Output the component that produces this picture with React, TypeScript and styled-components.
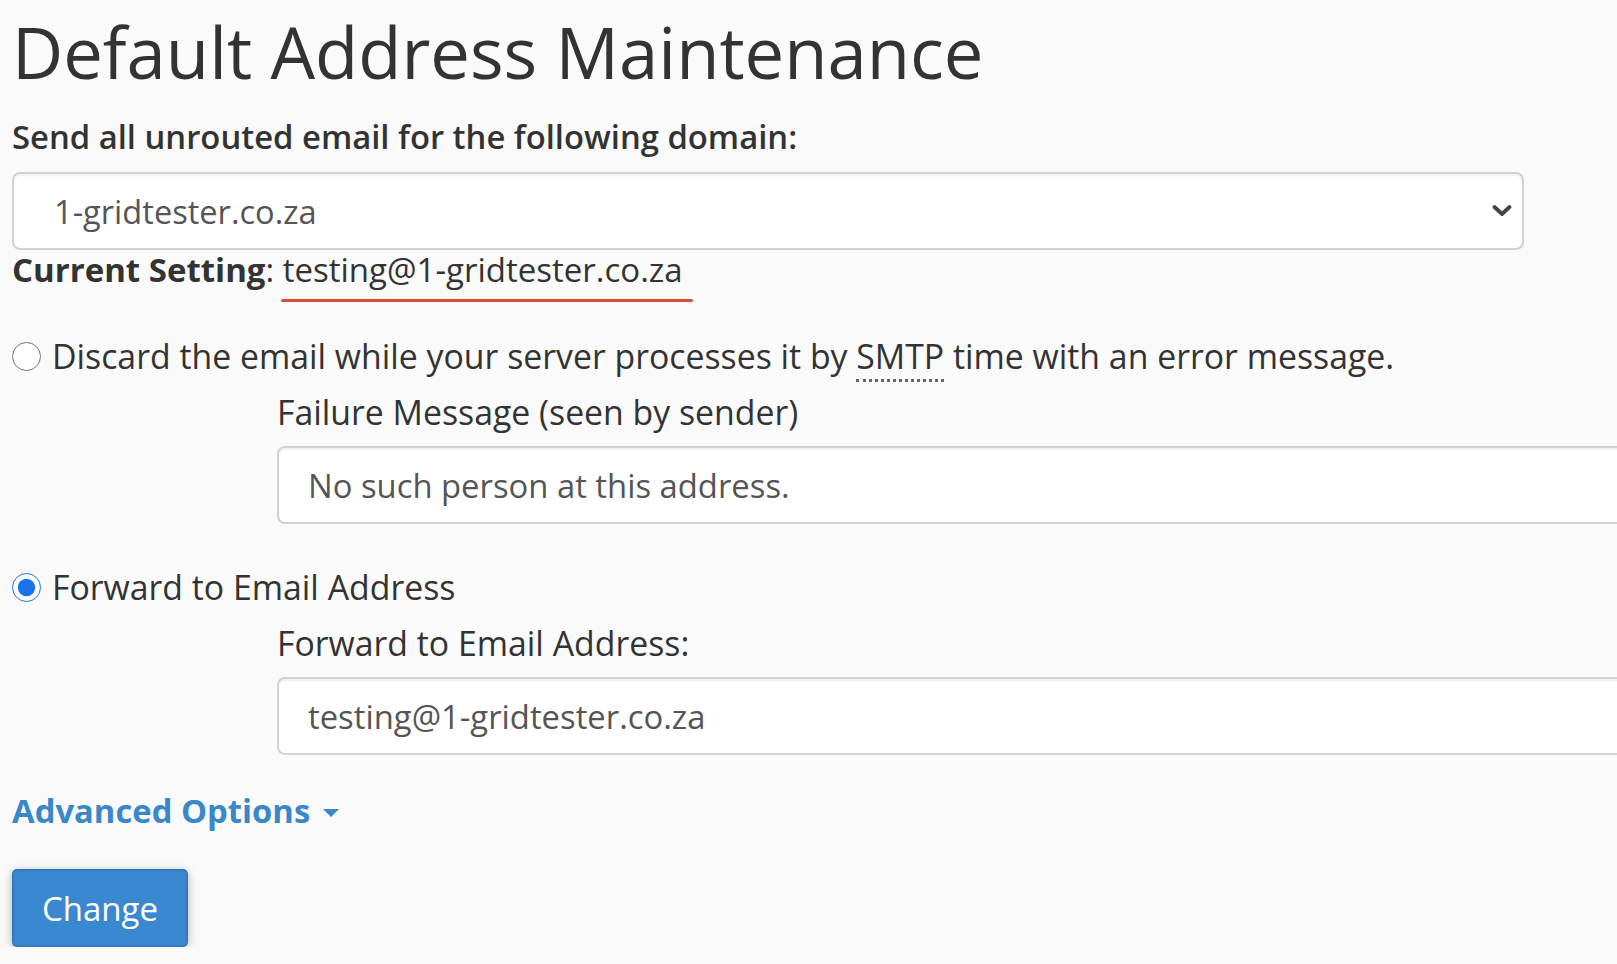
import React from "react";
import styled, { createGlobalStyle } from "styled-components";

const GlobalStyle = createGlobalStyle`
  html, body {
    margin: 0;
    padding: 0;
    background: #fafafa;
    overflow: hidden;
  }
  body {
    font-family: "Open Sans", "Liberation Sans", sans-serif;
    font-size: 33.8px;
    line-height: 40px;
    color: #333;
  }
`;

function App(): JSX.Element {
  return (
    <>
      <GlobalStyle />
      <Page>
        <Title>Default Address Maintenance</Title>
        <FieldLabel htmlFor="domain">
          Send all unrouted email for the following domain:
        </FieldLabel>
        <SelectWrap>
          <DomainSelect id="domain" defaultValue="1-gridtester.co.za">
            <option>1-gridtester.co.za</option>
          </DomainSelect>
          <Chevron viewBox="0 0 20 14" aria-hidden="true">
            <path
              d="M2.5 3 L10 10 L17.5 3"
              fill="none"
              stroke="#444"
              strokeWidth="3.8"
              strokeLinecap="round"
              strokeLinejoin="round"
            />
          </Chevron>
        </SelectWrap>
        <CurrentSetting>
          <strong>Current Setting</strong>:{" "}
          <Marked>testing@1-gridtester.co.za</Marked>
        </CurrentSetting>

        <RadioRow $top={46}>
          <Radio type="radio" name="action" id="discard" />
          <label htmlFor="discard">
            Discard the email while your server processes it by{" "}
            <Abbr title="Simple Mail Transfer Protocol">SMTP</Abbr> time with an
            error message.
          </label>
        </RadioRow>
        <SubBlock>
          <SubLabel htmlFor="failmsg">Failure Message (seen by sender)</SubLabel>
          <TextInput id="failmsg" defaultValue="No such person at this address." />
        </SubBlock>

        <RadioRow $top={43}>
          <Radio type="radio" name="action" id="forward" defaultChecked />
          <label htmlFor="forward">Forward to Email Address</label>
        </RadioRow>
        <SubBlock>
          <SubLabel htmlFor="fwd">Forward to Email Address:</SubLabel>
          <TextInput id="fwd" defaultValue="testing@1-gridtester.co.za" />
        </SubBlock>

        <AdvancedLink href="#">
          Advanced Options <Caret />
        </AdvancedLink>
        <div>
          <ChangeButton type="button">Change</ChangeButton>
        </div>
      </Page>
    </>
  );
}

export default App;

const Page = styled.div`
  padding: 14px 0 0 12px;
`;

const Title = styled.h1`
  margin: 0 0 26px 0;
  font-size: 70.6px;
  font-weight: 400;
  line-height: 77px;
  color: #333;
`;

const FieldLabel = styled.label`
  display: block;
  font-size: 32.8px;
  font-weight: 600;
  margin-bottom: 15px;
`;

const SelectWrap = styled.div`
  position: relative;
  width: 1512px;
`;

const DomainSelect = styled.select`
  display: block;
  width: 100%;
  height: 78px;
  box-sizing: border-box;
  padding: 0 60px 0 40px;
  appearance: none;
  background: #fff;
  border: 2px solid #d2d2d2;
  border-radius: 8px;
  font-family: inherit;
  font-size: 32.6px;
  color: #555;
  box-shadow: inset 0 2px 2px rgba(0, 0, 0, 0.06);
`;

const Chevron = styled.svg`
  position: absolute;
  right: 12px;
  top: 32px;
  width: 20px;
  height: 14px;
  pointer-events: none;
`;

const CurrentSetting = styled.div`
  font-size: 33px;

  strong {
    font-weight: 700;
  }
`;

const Marked = styled.span`
  position: relative;
  display: inline-block;

  &::after {
    content: "";
    position: absolute;
    left: -2px;
    right: -10px;
    bottom: -12px;
    height: 3px;
    border-radius: 2px;
    background: #e24a38;
  }
`;

const RadioRow = styled.div<{ $top: number }>`
  display: flex;
  align-items: center;
  gap: 11px;
  margin-top: ${(p) => p.$top}px;
  font-weight: 500;
`;

const Radio = styled.input`
  width: 29px;
  height: 29px;
  margin: 0;
  flex: none;
  accent-color: #1a73e8;
`;

const Abbr = styled.abbr`
  text-decoration: none;
  border-bottom: 3px dotted #666;
  cursor: help;
`;

const SubBlock = styled.div`
  padding-left: 265px;
  margin-top: 16px;
`;

const SubLabel = styled.label`
  display: block;
  font-weight: 500;
  margin-bottom: 14px;
`;

const TextInput = styled.input`
  display: block;
  width: 1500px;
  height: 78px;
  box-sizing: border-box;
  padding: 0 29px;
  background: #fff;
  border: 2px solid #d2d2d2;
  border-radius: 8px;
  font-family: inherit;
  font-size: 32.8px;
  color: #555;
  box-shadow: inset 0 2px 2px rgba(0, 0, 0, 0.06);
`;

const AdvancedLink = styled.a`
  display: inline-flex;
  align-items: center;
  margin-top: 36px;
  font-size: 32.8px;
  font-weight: 700;
  color: #3a87c9;
  text-decoration: none;
`;

const Caret = styled.span`
  display: inline-block;
  width: 0;
  height: 0;
  margin-left: 13px;
  margin-top: 4px;
  border-left: 8px solid transparent;
  border-right: 8px solid transparent;
  border-top: 8px solid #3a87c9;
`;

const ChangeButton = styled.button`
  margin-top: 38px;
  height: 78px;
  padding: 0 28px;
  background: #3a89d0;
  border: 2px solid #2f7ac0;
  border-radius: 5px;
  color: #fff;
  font-family: inherit;
  font-size: 33px;
  cursor: pointer;
  box-shadow: 0 2px 8px rgba(0, 0, 0, 0.3);
`;
